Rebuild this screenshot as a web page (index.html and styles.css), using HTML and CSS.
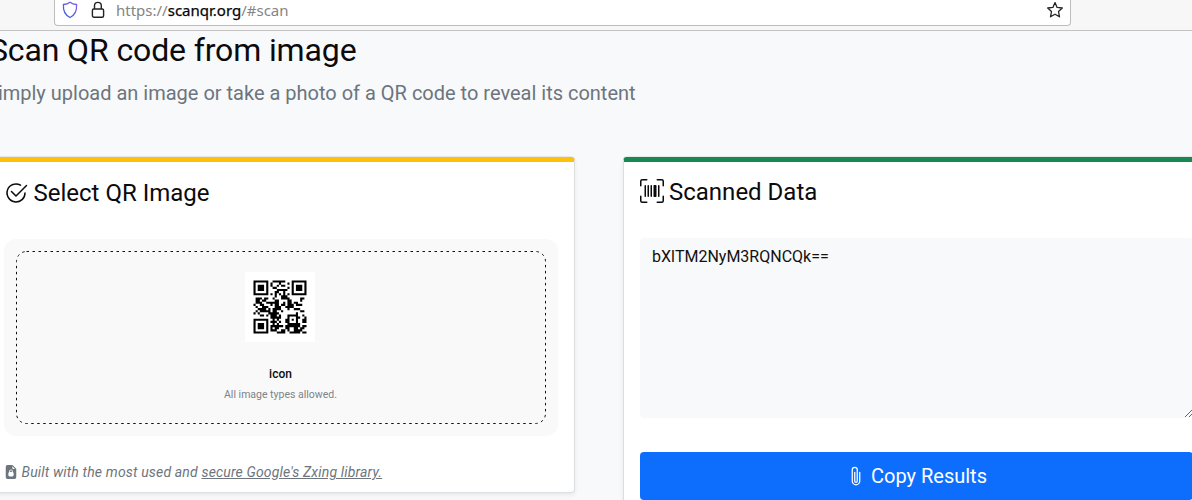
FILE: index.html
```html
<!DOCTYPE html>
<html lang="en">
<head>
<meta charset="utf-8">
<title>Scan QR code from image</title>
<link rel="stylesheet" href="styles.css">
</head>
<body>
<header class="toolbar">
  <div class="urlbar">
    <svg class="shield" viewBox="0 0 16 18" width="16" height="18"><defs><linearGradient id="sh" x1="0" y1="1" x2="1" y2="0"><stop offset="0" stop-color="#2f62d0"/><stop offset="1" stop-color="#8a5cf0"/></linearGradient></defs><path d="M8 1.2C6.200 2.600 3.900 3.300 1.400 3.500C1 9.500 3 14 8 16.500C13 14 15 9.500 14.600 3.500C12.100 3.300 9.800 2.600 8 1.200Z" fill="none" stroke="url(#sh)" stroke-width="1.300" stroke-linejoin="round"/></svg>
    <svg class="lock" viewBox="0 0 14 18" width="14" height="18"><path d="M3.500 8V4.800a3.400 3.400 0 0 1 6.800 0V8" fill="none" stroke="#222" stroke-width="1.400"/><rect x="1.400" y="8" width="11.200" height="8.300" rx="1.500" fill="none" stroke="#222" stroke-width="1.400"/></svg>
    <span class="url">https://<b>scanqr.org</b>/#scan</span>
    <svg class="star" viewBox="0 0 18 18" width="18" height="18"><path d="M9 1.600L11.100 6.400L16.300 7L12.500 10.500L13.500 15.800L9 13.200L4.500 15.800L5.500 10.500L1.700 7L6.900 6.400Z" fill="none" stroke="#222" stroke-width="1.300" stroke-linejoin="round"/></svg>
  </div>
</header>
<main class="page">
  <h1 class="title">Scan QR code from image</h1>
  <p class="lead">Simply upload an image or take a photo of a QR code to reveal its content</p>
  <div class="cards">
    <section class="card card-select">
      <h2 class="card-title"><svg class="check" viewBox="0 0 16 16" width="24" height="24" fill="currentColor"><path d="M2.500 8a5.500 5.500 0 0 1 8.250-4.764.5.500 0 0 0 .5-.866A6.500 6.500 0 1 0 14.500 8a.5.500 0 0 0-1 0 5.500 5.500 0 1 1-11 0z"/><path d="M15.354 3.354a.5.500 0 0 0-.708-.708L8 9.293 5.354 6.646a.5.500 0 1 0-.708.708l3 3a.5.500 0 0 0 .708 0l7-7z"/></svg>Select QR Image</h2>
      <div class="drop">
        <svg class="dashes" width="530" height="173"><rect x=".5" y=".5" width="529" height="172" rx="10"/></svg>
        <svg class="qr" id="qr" viewBox="-4 -4 33 33"></svg>
        <div class="file">icon</div>
        <div class="hint">All image types allowed.</div>
      </div>
      <p class="note"><svg class="doc" viewBox="0 0 16 16" width="14" height="14" fill="currentColor"><path fill-rule="evenodd" d="M4 0h5.300a1 1 0 0 1 .7.300L13.700 4a1 1 0 0 1 .3.700V14a2 2 0 0 1-2 2H4a2 2 0 0 1-2-2V2a2 2 0 0 1 2-2zM9.500 1.500v2a1 1 0 0 0 1 1h2zM6 7v1.100C5.500 8.300 5 8.700 5 9.300v2.400C5 12.500 5.800 13 6.500 13h3c.7 0 1.500-.5 1.500-1.300V9.300c0-.6-.5-1-1-1.200V7a2 2 0 1 0-4 0zM7 7a1 1 0 0 1 2 0v1H7z"/></svg>Built with the most used and <u>secure Google's Zxing library.</u></p>
    </section>
    <section class="card card-data">
      <h2 class="card-title"><svg class="scan" viewBox="0 0 16 16" width="24" height="24" fill="currentColor"><path d="M1.500 1a.5.500 0 0 0-.5.500v3a.5.500 0 0 1-1 0v-3A1.500 1.500 0 0 1 1.500 0h3a.5.500 0 0 1 0 1h-3zM11 .5a.5.500 0 0 1 .5-.5h3A1.500 1.500 0 0 1 16 1.500v3a.5.500 0 0 1-1 0v-3a.5.500 0 0 0-.5-.5h-3a.5.500 0 0 1-.5-.5zM.5 11a.5.500 0 0 1 .5.500v3a.5.500 0 0 0 .5.500h3a.5.500 0 0 1 0 1h-3A1.500 1.500 0 0 1 0 14.500v-3a.5.500 0 0 1 .5-.5zm15 0a.5.500 0 0 1 .5.500v3a1.500 1.500 0 0 1-1.500 1.500h-3a.5.500 0 0 1 0-1h3a.5.500 0 0 0 .5-.5v-3a.5.500 0 0 1 .5-.5zM3 4.500a.5.500 0 0 1 1 0v7a.5.500 0 0 1-1 0v-7zm2 0a.5.500 0 0 1 1 0v7a.5.500 0 0 1-1 0v-7zm2 0a.5.500 0 0 1 1 0v7a.5.500 0 0 1-1 0v-7zm2 0a.5.500 0 0 1 .5-.5h1a.5.500 0 0 1 .5.500v7a.5.500 0 0 1-.5.500h-1a.5.500 0 0 1-.5-.5v-7zm3 0a.5.500 0 0 1 1 0v7a.5.500 0 0 1-1 0v-7z"/></svg>Scanned Data</h2>
      <textarea class="result" spellcheck="false">bXlTM2NyM3RQNCQk==</textarea>
      <button class="copy"><svg viewBox="0 0 16 16" width="20" height="20" fill="currentColor"><path d="M4.500 3a2.500 2.500 0 0 1 5 0v9a1.500 1.500 0 0 1-3 0V5a.5.500 0 0 1 1 0v7a.5.500 0 0 0 1 0V3a1.500 1.500 0 1 0-3 0v9a2.500 2.500 0 0 0 5 0V5a.5.500 0 0 1 1 0v7a3.500 3.500 0 1 1-7 0V3z"/></svg>Copy Results</button>
    </section>
  </div>
</main>
<script src="qr.js"></script>
</body>
</html>
```

FILE: styles.css
```css
* { box-sizing: border-box; }
body { margin: 0; height: 500px; overflow: hidden; background: #f8f9fb; color: #0b0b0d; font-family: Roboto, "Liberation Sans", sans-serif; }
.toolbar { height: 31px; padding-left: 54px; background: #f7f7f7; border-bottom: 1px solid #c3c3c3; }
.urlbar { display: flex; align-items: flex-start; width: 1017px; height: 26px; padding: 1px 6px 0 7px; background: #fff; border: 1px solid #bdbdbd; border-top: 0; border-radius: 0 0 4px 4px; }
.lock { margin-left: 13px; }
.url { margin: -1px 0 0 11px; font: 15px/20px "Noto Sans", sans-serif; color: #858585; white-space: nowrap; }
.url b { font-weight: 400; color: #050505; -webkit-text-stroke: .25px #050505; }
.star { margin-left: auto; }
.page { width: 1216px; margin-left: -12px; }
.title { margin: 0; padding: 0 0 0 1px; font-size: 32px; line-height: 38px; font-weight: 400; letter-spacing: -.13px; white-space: nowrap; }
.lead { margin: 9px 0 0 -2px; font-size: 20px; line-height: 30px; color: #6c757d; white-space: nowrap; }
.cards { display: flex; align-items: flex-start; gap: 48px; margin-top: 48px; }
.card { flex: none; background: #fff; border: 1px solid #dcdee0; border-top: 5px solid; border-radius: 4px; box-shadow: 0 2px 4px rgba(0, 0, 0, .075), 0 -1px 0 rgba(0, 0, 0, .06); }
.card-select { width: 587px; height: 336px; margin-top: 1px; padding: 0 15px; border-top-color: #ffc107; }
.card-data { width: 587px; height: 360px; margin-top: 1px; padding: 0 15px 0 16px; border-top-color: #198754; }
.card-title { display: flex; align-items: center; margin: 15px 0 0; height: 29px; font-size: 24px; font-weight: 400; white-space: nowrap; }
.card-select .card-title { margin: 16px 0 0 -.5px; }
.check { margin-right: 6px; }
.scan { margin: -1px 5.500px 0 -.5px; }
.drop { position: relative; display: flex; flex-direction: column; align-items: center; width: 554px; height: 197px; margin-top: 32px; padding: 33px 2px 0 0; background: #f9f9f9; border-radius: 12px; }
.dashes { position: absolute; left: 12px; top: 12px; }
.dashes rect { fill: none; stroke: #111; stroke-width: 1; stroke-dasharray: 2.500 3.500; }
.qr { width: 70px; height: 70px; background: #fff; }
.file { margin: 23px 0 0 1px; font-size: 12px; line-height: 18px; font-weight: 500; }
.hint { margin: 4px 0 0 1px; font-size: 10.500px; line-height: 16px; color: #7c848b; }
.note { display: flex; align-items: center; margin: 26px 0 0; font-size: 14px; letter-spacing: .165px; line-height: 20px; font-style: italic; color: #6c757d; white-space: pre; }
.doc { margin: 0 4px 0 -.5px; }
.result { display: block; width: 553px; height: 180px; margin: 32px 0 0; padding: 7px 12px; border: 0; outline: 0; border-radius: 4px; background: #f8f9fb; font: 16px/24px Roboto, sans-serif; color: #111; resize: both; }
.copy { display: flex; justify-content: center; align-items: center; gap: 5px; width: 553px; height: 48px; margin-top: 34px; padding: 0; border: 0; border-radius: 4px; background: #0d6efd; color: #fff; font: 20px/30px Roboto, sans-serif; }
```

FILE: qr.js
```js
// Version 2 QR symbol (25x25), byte mode, single error-correction block.
const SIZE = 25, TOTAL = 44;
const LEVELS = { L: [34, 1], M: [28, 0], Q: [22, 3] };
const EXP = [], LOG = [];
for (let i = 0, x = 1; i < 255; i++) { EXP[i] = x; LOG[x] = i; x <<= 1; if (x & 256) x ^= 285; }
const mul = (a, b) => a && b ? EXP[(LOG[a] + LOG[b]) % 255] : 0;

function codewords(text, level) {
  const n = LEVELS[level][0], bits = [];
  const put = (v, l) => { for (let i = l - 1; i >= 0; i--) bits.push(v >> i & 1); };
  put(4, 4); put(text.length, 8);
  for (const c of text) put(c.charCodeAt(0), 8);
  put(0, 4);
  while (bits.length % 8) bits.push(0);
  const data = [];
  for (let i = 0; i < bits.length; i += 8) data.push(parseInt(bits.slice(i, i + 8).join(''), 2));
  for (let p = 236; data.length < n; p ^= 253) data.push(p);
  const ec = TOTAL - n;
  let gen = [1];
  for (let i = 0; i < ec; i++) {
    const next = gen.concat(0);
    gen.forEach((g, j) => { next[j + 1] ^= mul(g, EXP[i]); });
    gen = next;
  }
  const rem = data.concat(Array(ec).fill(0));
  for (let i = 0; i < n; i++) { const f = rem[i]; gen.forEach((g, j) => { rem[i + j] ^= mul(g, f); }); }
  return data.concat(rem.slice(n));
}

const MASKS = [
  (r, c) => (r + c) % 2, (r, c) => r % 2, (r, c) => c % 3, (r, c) => (r + c) % 3,
  (r, c) => ((r >> 1) + Math.floor(c / 3)) % 2, (r, c) => r * c % 2 + r * c % 3,
  (r, c) => (r * c % 2 + r * c % 3) % 2, (r, c) => ((r + c) % 2 + r * c % 3) % 2
];

function matrix(text, level, mask) {
  const m = Array.from({ length: SIZE }, () => Array(SIZE).fill(null));
  const square = (cr, cc, rad, dark) => {
    for (let r = -rad; r <= rad; r++) for (let c = -rad; c <= rad; c++)
      if (m[cr + r] && cc + c >= 0 && cc + c < SIZE) m[cr + r][cc + c] = dark(Math.max(Math.abs(r), Math.abs(c)));
  };
  for (let i = 0; i < SIZE; i++) m[6][i] = m[i][6] = +!(i % 2);
  for (const [r, c] of [[3, 3], [3, 21], [21, 3]]) square(r, c, 4, d => +(d !== 2 && d !== 4));
  square(18, 18, 2, d => +(d !== 1));
  const five = LEVELS[level][1] << 3 | mask;
  let e = five;
  for (let i = 0; i < 10; i++) e = (e << 1) ^ ((e >> 9) * 0x537);
  const f = (five << 10 | e) ^ 0x5412, b = i => f >> i & 1;
  for (let i = 0; i < 6; i++) m[i][8] = b(i);
  m[7][8] = b(6); m[8][8] = b(7); m[8][7] = b(8);
  for (let i = 9; i < 15; i++) m[8][14 - i] = b(i);
  for (let i = 0; i < 8; i++) m[8][SIZE - 1 - i] = b(i);
  for (let i = 8; i < 15; i++) m[SIZE - 15 + i][8] = b(i);
  m[SIZE - 8][8] = 1;
  const cw = codewords(text, level);
  let k = 0;
  for (let right = SIZE - 1; right >= 1; right -= 2) {
    if (right === 6) right = 5;
    for (let v = 0; v < SIZE; v++) {
      const up = ((right + 1) & 2) === 0, r = up ? SIZE - 1 - v : v;
      for (const c of [right, right - 1]) {
        if (m[r][c] !== null) continue;
        const bit = k < TOTAL * 8 ? cw[k >> 3] >> (7 - (k & 7)) & 1 : 0;
        k++;
        m[r][c] = bit ^ (MASKS[mask](r, c) === 0 ? 1 : 0);
      }
    }
  }
  return m;
}

const path = matrix('bXlTM2NyM3RQNCQk==', 'Q', 3)
  .map((row, r) => row.map((v, c) => v ? `M${c} ${r}h1v1h-1z` : '').join('')).join('');
document.getElementById('qr').innerHTML = `<path d="${path}"/>`;
```
